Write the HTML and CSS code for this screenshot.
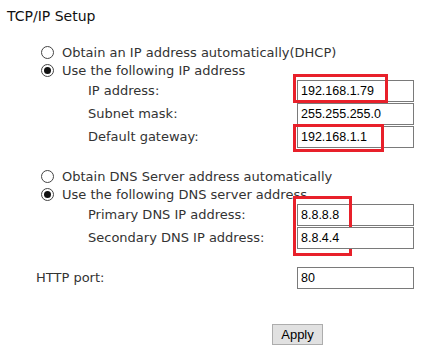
FILE: index.html
```html
<!DOCTYPE html>
<html>
<head>
<meta charset="UTF-8" />
<link rel="stylesheet" href="styles.css">
</head>
<body>
<div class="page">
  <div class="title">TCP/IP Setup</div>

  <div class="group">
    <label class="opt"><input type="radio" name="ipmode" />Obtain an IP address automatically(DHCP)</label>
    <label class="opt"><input type="radio" name="ipmode" checked />Use the following IP address</label>

    <div class="field">
      <span class="lbl">IP address:</span>
      <span class="cell"><input type="text" value="192.168.1.79" /><i class="mark mark-ip"></i></span>
    </div>
    <div class="field">
      <span class="lbl">Subnet mask:</span>
      <span class="cell"><input type="text" value="255.255.255.0" /></span>
    </div>
    <div class="field">
      <span class="lbl">Default gateway:</span>
      <span class="cell"><input type="text" value="192.168.1.1" /><i class="mark mark-gw"></i></span>
    </div>
  </div>

  <div class="group group-dns">
    <label class="opt"><input type="radio" name="dnsmode" />Obtain DNS Server address automatically</label>
    <label class="opt"><input type="radio" name="dnsmode" checked />Use the following DNS server address</label>

    <div class="field">
      <span class="lbl">Primary DNS IP address:</span>
      <span class="cell"><input type="text" value="8.8.8.8" /><i class="mark mark-dns"></i></span>
    </div>
    <div class="field">
      <span class="lbl">Secondary DNS IP address:</span>
      <span class="cell"><input type="text" value="8.8.4.4" /></span>
    </div>
  </div>

  <div class="field field-port">
    <span class="lbl">HTTP port:</span>
    <span class="cell"><input type="text" value="80" /></span>
  </div>

  <div class="actions"><input type="button" class="apply" value="Apply" /></div>
</div>
</body>
</html>
```

FILE: styles.css
```css
body {
  margin: 0;
  background: #fff;
  font-family: "DejaVu Sans", Verdana, sans-serif;
  font-size: 13px;
  color: #333;
}

div.page {
  width: 421px;
}

div.title {
  padding: 8px 0 0 7px;
  height: 16px;
  line-height: 16px;
  font-size: 14px;
  color: #111;
}

div.group {
  margin-top: 19px;
}

div.group-dns {
  margin-top: 19px;
}

label.opt {
  display: flex;
  align-items: center;
  height: 18px;
  margin-left: 41px;
}

label.opt input {
  appearance: none;
  -webkit-appearance: none;
  width: 13px;
  height: 13px;
  margin: 0 8px 0 0;
  border: 1px solid #444;
  border-radius: 50%;
  background: #fff;
  display: grid;
  place-items: center;
}

label.opt input:checked::after {
  content: "";
  width: 7px;
  height: 7px;
  border-radius: 50%;
  background: #111;
}

div.field {
  display: grid;
  grid-template-columns: 209px 117px;
  align-items: center;
  height: 23px;
  margin-left: 88px;
}

div.field-port {
  margin-top: 17px;
  margin-left: 36px;
  grid-template-columns: 261px 117px;
}

span.cell {
  position: relative;
  display: block;
  height: 22px;
}

span.cell input {
  box-sizing: border-box;
  width: 117px;
  height: 22px;
  margin: 0;
  padding: 0 3px;
  border: 1px solid #7a7a7a;
  font-family: "Liberation Sans", Tahoma, sans-serif;
  font-size: 12.5px;
  color: #000;
  outline: none;
}

i.mark {
  position: absolute;
  border: 3px solid #e8202a;
  box-sizing: border-box;
  pointer-events: none;
}

i.mark-ip {
  left: -4px;
  top: -6px;
  width: 95px;
  height: 29px;
}

i.mark-gw {
  left: -4px;
  top: -2px;
  width: 91px;
  height: 28px;
}

i.mark-dns {
  left: -4px;
  top: -8px;
  width: 59px;
  height: 60px;
}

div.actions {
  margin-top: 35px;
  padding-left: 272px;
}

input.apply {
  box-sizing: border-box;
  width: 51px;
  height: 21px;
  margin: 0;
  padding: 0;
  border: 1px solid #adadad;
  background: #e1e1e1;
  font-family: "Liberation Sans", Tahoma, sans-serif;
  font-size: 13px;
  color: #000;
}
```
